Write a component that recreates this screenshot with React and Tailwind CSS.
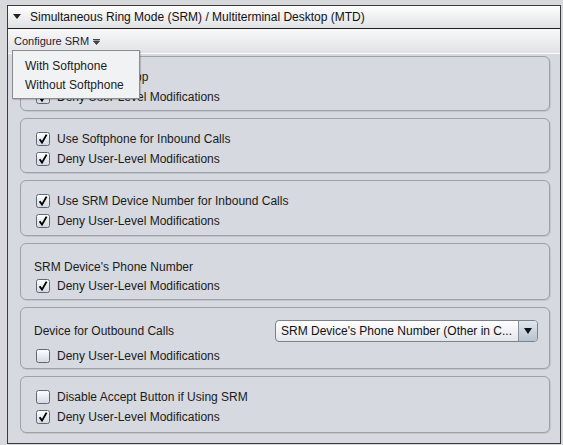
import React from "react";

const Check = ({ checked }) => (
  <svg width="14" height="14" viewBox="0 0 14 14" className="shrink-0">
    <defs>
      <linearGradient id="cbg" x1="0" y1="0" x2="0" y2="1">
        <stop offset="0" stopColor="#ffffff" />
        <stop offset="1" stopColor="#d3d8e0" />
      </linearGradient>
    </defs>
    <rect x="0.5" y="0.5" width="13" height="13" rx="2" fill="url(#cbg)" stroke="#5f6773" />
    {checked && (
      <path d="M3.6 7.2 L6 10.6 L10.6 2.6" stroke="#000" strokeWidth="1.9" fill="none" strokeLinejoin="miter" />
    )}
  </svg>
);

const Row = ({ checked, label }) => (
  <div className="flex items-center h-[20px] pl-[15px] gap-[7px]">
    <Check checked={checked} />
    <span>{label}</span>
  </div>
);

const Group = ({ children, className = "" }) => (
  <div
    className={
      "rounded-[6px] border border-[#9ea1a7] bg-[#d6d9df] shadow-[1px_1px_0_#c3c6cc] " + className
    }
  >
    {children}
  </div>
);

export default function App() {
  return (
    <div
      className="w-[563px] h-[445px] bg-[#d7d9dd] pt-[5px] pl-[7px] pr-[2px] pb-[1px] text-[12px] text-[#1b1b1b]"
      style={{ fontFamily: '"Liberation Sans", Arial, sans-serif' }}
    >
      <div className="relative h-full border border-[#3a3a3a] flex flex-col bg-[#d6d9df]">
        {/* title bar */}
        <div className="h-[23px] shrink-0 flex items-center pl-[5px] gap-[9px] bg-gradient-to-b from-[#fefefe] to-[#e1e2e5] border-b border-[#1e1e1e]">
          <svg width="8" height="6" viewBox="0 0 8 6">
            <path d="M0 0 H8 L4 5 Z" fill="#222" />
          </svg>
          <span className="text-[12px] text-[#111]">
            Simultaneous Ring Mode (SRM) / Multiterminal Desktop (MTD)
          </span>
        </div>

        {/* toolbar */}
        <div className="h-[25px] shrink-0 flex items-center pl-[6px] gap-[4px] bg-gradient-to-b from-[#f8f8f9] to-[#e2e3e6] border-b border-[#fbfbfc]">
          <span className="text-[11px] text-[#1c2333]">Configure SRM</span>
          <svg width="7" height="6" viewBox="0 0 7 6" className="mt-[2px]">
            <path d="M0 0.5 H7 M0.5 2 H6.5 L3.5 5.5 Z" stroke="#444" strokeWidth="1" fill="#444" />
          </svg>
        </div>

        {/* content */}
        <div className="flex-1 flex flex-col gap-[7px] pt-[2px] pl-[12px] pr-[10px]">
          <Group className="h-[55px] pt-[10px]">
            <Row checked label="Enable SRM App" />
            <Row checked label="Deny User-Level Modifications" />
          </Group>

          <Group className="h-[55px] pt-[10px]">
            <Row checked label="Use Softphone for Inbound Calls" />
            <Row checked label="Deny User-Level Modifications" />
          </Group>

          <Group className="h-[56px] pt-[10px]">
            <Row checked label="Use SRM Device Number for Inbound Calls" />
            <Row checked label="Deny User-Level Modifications" />
          </Group>

          <Group className="h-[57px] pt-[14px]">
            <div className="h-[18px] flex items-center pl-[13px]">SRM Device's Phone Number</div>
            <Row checked label="Deny User-Level Modifications" />
          </Group>

          <Group className="h-[62px] pt-[12px]">
            <div className="flex items-center justify-between pl-[13px] pr-[11px] h-[22px]">
              <span>Device for Outbound Calls</span>
              <div className="w-[263px] h-[22px] flex rounded-[4px] border border-[#7d828a] bg-gradient-to-b from-[#ffffff] to-[#e3e6eb] overflow-hidden">
                <div className="flex-1 flex items-center pl-[5px] whitespace-nowrap text-[#111]">
                  SRM Device's Phone Number (Other in C...
                </div>
                <div className="w-[19px] flex items-center justify-center border-l border-[#8a9099] bg-gradient-to-b from-[#dfe6ee] to-[#b7c3d0]">
                  <svg width="8" height="6" viewBox="0 0 8 6">
                    <path d="M0 0 H8 L4 6 Z" fill="#111" />
                  </svg>
                </div>
              </div>
            </div>
            <div className="mt-[4px]">
              <Row checked={false} label="Deny User-Level Modifications" />
            </div>
          </Group>

          <Group className="h-[57px] pt-[10px]">
            <Row checked={false} label="Disable Accept Button if Using SRM" />
            <Row checked label="Deny User-Level Modifications" />
          </Group>
        </div>

        {/* dropdown menu */}
        <div className="absolute left-[4px] top-[44px] w-[128px] h-[49px] bg-[#f1f2f4] border border-[#8a8c90] shadow-[1px_1px_1px_rgba(0,0,0,0.15)] pt-[5px]">
          <div className="h-[19px] flex items-center pl-[12px] text-[#1b1b1b]">With Softphone</div>
          <div className="h-[19px] flex items-center pl-[12px] text-[#1b1b1b]">Without Softphone</div>
        </div>
      </div>
    </div>
  );
}
